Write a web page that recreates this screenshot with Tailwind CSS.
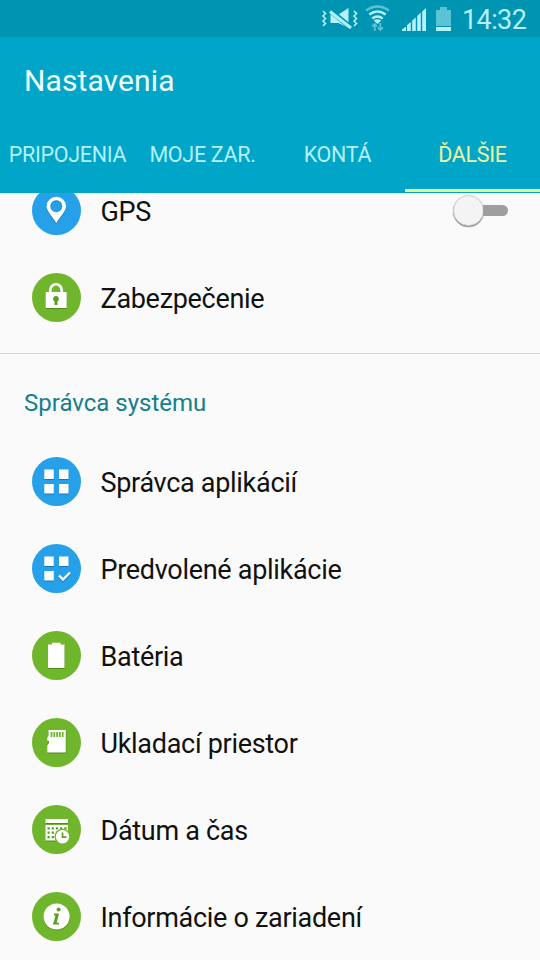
<!DOCTYPE html>
<html lang="sk">
<head>
<meta charset="utf-8">
<title>Nastavenia</title>
<script src="https://cdn.jsdelivr.net/npm/@tailwindcss/browser@4"></script>
</head>
<body class="w-[540px] h-[960px] overflow-hidden bg-[#fafafa] font-[Roboto,sans-serif] text-[#111]">
<div class="flex flex-col h-[960px]">
  <header class="h-[193px] shrink-0 bg-[#00a5c8] flex flex-col">
    <div class="h-[37px] bg-[#0094b3] flex items-start text-[#b4f1fb]">
      <svg class="ml-[320px] shrink-0" width="135" height="37" viewBox="320 0 135 37" fill="none">
        <g stroke="#b4f1fb" stroke-width="1.600">
          <path d="M323 11l2.500 2.500-2.500 2.500 2.500 2.500-2.500 2.500 2.500 2.500-2.500 2.500"/>
          <path d="M354 11l2.500 2.500-2.500 2.500 2.500 2.500-2.500 2.500 2.500 2.500-2.500 2.500"/>
        </g>
        <path fill="#b4f1fb" d="M330.500 14.500h8l10-6.500v20l-10-5h-8z"/>
        <path stroke="#0094b3" stroke-width="5" d="M329 9.500l23 19"/>
        <path stroke="#b4f1fb" stroke-width="3" d="M330 11.500l21 16.500"/>
        <g stroke-width="2.300">
          <path stroke="#5cc3d7" d="M366 10.500q11.500-8 23 0"/>
          <path stroke="#b4f1fb" d="M369.300 14.500q8.200-6 16.400 0M372.300 18.500q5.200-4 10.400 0"/>
        </g>
        <path fill="#b4f1fb" d="M373.800 20.500q3.700-2.500 7.400 0l-3.700 3.500z"/>
        <path stroke="#5cc3d7" stroke-width="1.800" d="M374.800 31v-7M372.300 26.500l2.500-2.500 2.300 2.500M380.300 23v7M378 27.500l2.300 2.500 2.500-2.500"/>
        <path fill="#b4f1fb" d="M402 31v-1.500l4-3V31zM407 31v-6l3.800-3v9zM412.200 31V20.500l3.600-3V31zM417.200 31V16l3.600-3.500V31zM422.200 31V11.500l3.800-3.500V31z"/>
        <path fill="#5cc3d7" d="M436 10h4V7h7v3h4v16h-15z"/>
        <path fill="#b4f1fb" d="M436 27h15v4h-15z"/>
      </svg>
      <span class="ml-[7px] mt-[4px] text-[27px] leading-[33px] whitespace-nowrap" style="letter-spacing:-.6px">14:32</span>
    </div>
    <h1 class="mt-[24px] pl-6 text-[30px] leading-[40px] tracking-[0.1px] text-[#f0fdff] whitespace-nowrap">Nastavenia</h1>
    <nav class="flex-1 grid grid-cols-4 text-[21.500px] tracking-[-0.300px] text-[#b4f1fb] text-center leading-[30px] whitespace-nowrap">
      <span class="pt-[39px]">PRIPOJENIA</span>
      <span class="pt-[39px]">MOJE ZAR.</span>
      <span class="pt-[39px]">KONTÁ</span>
      <span class="mb-px pt-[39px] text-[#eef59a] border-b-[3px] border-[#e9f18d]">ĎALŠIE</span>
    </nav>
  </header>
  <main class="flex-1 overflow-hidden text-[27px] tracking-[-0.300px] leading-[32px] whitespace-nowrap">
    <div class="-mt-[26px] h-[87px] flex items-center pl-8 pr-8">
      <svg class="w-[49px] h-[49px] mr-[19.500px]" viewBox="0 0 49 49"><circle cx="24.500" cy="24.500" r="24.500" fill="#26a0e8"/><path fill="#1777b4" fill-rule="evenodd" d="M24.300 38.300C22 33 14.600 26.500 14.600 21.400a9.700 9.700 0 0 1 19.400 0c0 5.100-7.400 11.600-9.700 16.900zM24.300 15a6 6 0 1 0 0 12 6 6 0 0 0 0-12z"/><path fill="#fff" fill-rule="evenodd" d="M24.300 37.300C22 32 14.600 25.500 14.600 20.400a9.700 9.700 0 0 1 19.400 0c0 5.100-7.400 11.600-9.700 16.900zM24.300 14.200a6 6 0 1 0 0 12 6 6 0 0 0 0-12z"/></svg>
      <span class="pt-[2px]">GPS</span>
      <div class="ml-auto flex items-center">
        <div class="w-[31px] h-[31px] rounded-full bg-[#f4f4f4] border border-[#d0d0d0] shadow-[0_1px_1px_#888]"></div>
        <div class="-ml-[1px] w-[25px] h-[11px] rounded-r-full bg-[#9e9e9e]"></div>
      </div>
    </div>
    <div class="h-[87px] flex items-center pl-8">
      <svg class="w-[49px] h-[49px] mr-[19.500px]" viewBox="0 0 49 49"><circle cx="24.500" cy="24.500" r="24.500" fill="#70b62c"/><path fill="#4f8d18" d="M14 20h21v16H14z"/><path fill="none" stroke="#fff" stroke-width="2.600" d="M18.300 20v-3a5.700 5.700 0 0 1 11.400 0v3"/><path fill="#fff" d="M13.700 19h21v16h-21z"/><path fill="#5b9f20" d="M24 23a2.900 2.900 0 0 1 1.500 5.400V32h-3v-3.600A2.900 2.900 0 0 1 24 23z"/></svg>
      <span class="pt-[2px]">Zabezpečenie</span>
    </div>
    <div class="mt-[12px] h-[85px] border-t border-[#d6d6d6] pl-6 pt-[33px] text-[24px] tracking-normal text-[#14808a]">Správca systému</div>
    <div class="h-[87px] flex items-center pl-8">
      <svg class="w-[49px] h-[49px] mr-[19.500px]" viewBox="0 0 49 49"><circle cx="24.500" cy="24.500" r="24.500" fill="#26a0e8"/><path fill="#1777b4" d="M12.500 13.500h9.500v9.500h-9.500zM27 13.500h9.500v9.500H27zM12.500 28h9.500v9.500h-9.500zM27 28h9.500v9.500H27z"/><path fill="#fff" d="M12.300 12.500h9.500V22h-9.500zM27 12.500h9.500V22H27zM12.300 27h9.500v9.500h-9.500zM27 27h9.500v9.500H27z"/></svg>
      <span class="pt-[2px]">Správca aplikácií</span>
    </div>
    <div class="h-[87px] flex items-center pl-8">
      <svg class="w-[49px] h-[49px] mr-[19.500px]" viewBox="0 0 49 49"><circle cx="24.500" cy="24.500" r="24.500" fill="#26a0e8"/><path fill="#1777b4" d="M12.500 13.500h9.500v9.500h-9.500zM27 13.500h9.500v9.500H27zM12.500 28h9.500v9.500h-9.500z"/><path fill="#fff" d="M12.300 12.500h9.500V22h-9.500zM27 12.500h9.500V22H27zM12.300 27h9.500v9.500h-9.500z"/><path fill="none" stroke="#1777b4" stroke-width="2.400" d="M27 32.500l4 4L38 29.500"/><path fill="none" stroke="#fff" stroke-width="2.400" d="M27 31.500l4 4L38 28.500"/></svg>
      <span class="pt-[2px]">Predvolené aplikácie</span>
    </div>
    <div class="h-[87px] flex items-center pl-8">
      <svg class="w-[49px] h-[49px] mr-[19.500px]" viewBox="0 0 49 49"><circle cx="24.500" cy="24.500" r="24.500" fill="#70b62c"/><path fill="#4f8d18" d="M16.200 15h16.500v23H16.200z"/><path fill="#fff" d="M16 13.500h4v-1.700h8.500v1.700h4V37H16z"/></svg>
      <span class="pt-[2px]">Batéria</span>
    </div>
    <div class="h-[87px] flex items-center pl-8">
      <svg class="w-[49px] h-[49px] mr-[19.500px]" viewBox="0 0 49 49"><circle cx="24.500" cy="24.500" r="24.500" fill="#70b62c"/><path fill="#4f8d18" d="M16.500 13h17.800v22.500H15.500v-8.500l-1-.5 2-2z"/><path fill="#fff" d="M16.500 12h17.300v22.500H15.300V27l1.700-2v-2l-1.700-.5v-3l1.200-1.500z"/><path stroke="#70b62c" stroke-width="1.800" d="M19.500 14v5M22.300 14v5M25.100 14v5M27.900 14v5M30.700 14v5"/></svg>
      <span class="pt-[2px]">Ukladací priestor</span>
    </div>
    <div class="h-[87px] flex items-center pl-8">
      <svg class="w-[49px] h-[49px] mr-[19.500px]" viewBox="0 0 49 49"><circle cx="24.500" cy="24.500" r="24.500" fill="#70b62c"/><path fill="#4f8d18" d="M13.700 15h22.500v4H13.700zM13.700 21H36v15.500H13.700z"/><path fill="#fff" d="M13.500 14H36v4H13.500zM13.500 20H36v15.500H13.500z"/><path stroke="#5b9f20" stroke-width="2.200" stroke-dasharray="2.200 2" d="M15.500 23.300h19M15.500 27.700h10M15.500 32.100h8"/><circle cx="30.500" cy="31.700" r="8" fill="#70b62c"/><circle cx="30.500" cy="31.700" r="6.700" fill="#fff"/><path fill="none" stroke="#5b9f20" stroke-width="1.700" d="M30.500 27.500v4.700h4"/></svg>
      <span class="pt-[2px]">Dátum a čas</span>
    </div>
    <div class="h-[87px] flex items-center pl-8">
      <svg class="w-[49px] h-[49px] mr-[19.500px]" viewBox="0 0 49 49"><circle cx="24.500" cy="24.500" r="24.500" fill="#70b62c"/><circle cx="24.700" cy="25.400" r="13" fill="#4f8d18"/><circle cx="24.600" cy="24.500" r="13" fill="#fff"/><circle cx="26.600" cy="17.600" r="2" fill="#5b9f20"/><path fill="none" stroke="#5b9f20" stroke-width="3" d="M25.300 22l-2.300 9.500"/><path fill="none" stroke="#5b9f20" stroke-width="1.800" d="M22 22.500h4.500M21 31.700h6"/></svg>
      <span class="pt-[2px]">Informácie o zariadení</span>
    </div>
  </main>
</div>
</body>
</html>
